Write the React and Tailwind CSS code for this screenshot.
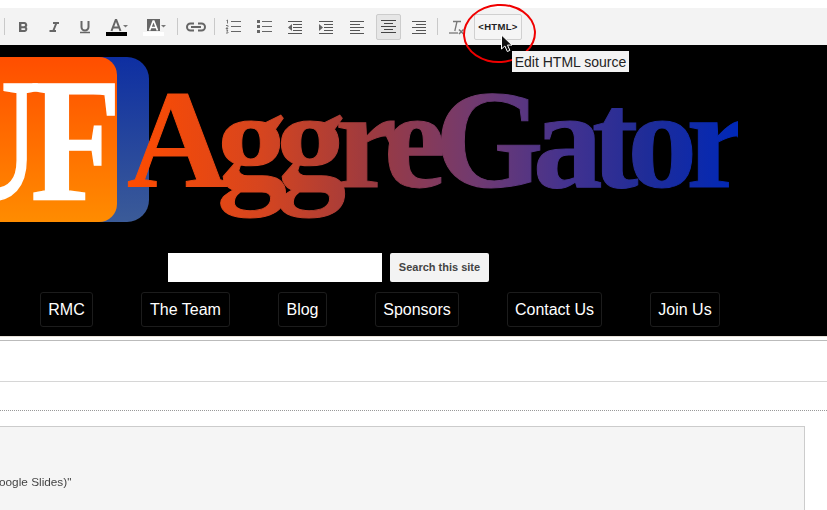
const sans = "font-['Liberation_Sans',Arial,sans-serif]";

function Sep({ className = "" }) {
  return <div className={`w-px h-[17px] bg-[#c9c9c9] shrink-0 ${className}`} />;
}

function Slot({ children, className = "" }) {
  return (
    <div className={`relative w-[31px] h-[37px] shrink-0 ${className}`}>
      <svg viewBox="0 0 31 37" width="31" height="37" fill="none" className="block">
        {children}
      </svg>
    </div>
  );
}

function Lines({ rows, color = "#555" }) {
  return rows.map(([x1, x2, y], i) => (
    <path key={i} d={`M${x1} ${y}H${x2}`} stroke={color} strokeWidth="1" shapeRendering="crispEdges" />
  ));
}

const ys = [13.5, 16.5, 19.5, 22.5, 25.5];

const nav = [
  ["RMC", "w-[53px]", "ml-0"],
  ["The Team", "w-[89px]", "ml-12"],
  ["Blog", "w-[49px]", "ml-12"],
  ["Sponsors", "w-[84px]", "ml-12"],
  ["Contact Us", "w-[95px]", "ml-12"],
  ["Join Us", "w-[70px]", "ml-12"],
];

export default function App() {
  return (
    <div className={`relative w-[827px] h-[510px] overflow-hidden bg-white ${sans}`}>
      {/* Toolbar */}
      <div className="mt-2 h-[37px] bg-[#f3f3f3] flex items-center pl-1">
        <Sep />
        <Slot className="ml-[3px]">
          <path
            fillRule="evenodd"
            d="M11 14h5.5a3 3 0 0 1 2 5 3 3 0 0 1-1.5 5H11zM13.4 16v2.2h2.6a1.1 1.1 0 0 0 0-2.2zM13.4 20.2V22h3a.9.9 0 0 0 0-1.8z"
            fill="#666"
          />
        </Slot>
        <Slot>
          <path d="M14 15h6M17.4 15l-3.2 8M10.5 23h6.5" stroke="#666" strokeWidth="2" />
        </Slot>
        <Slot>
          <path d="M11.5 13v6a3.5 3.5 0 0 0 7 0v-6" stroke="#666" strokeWidth="2" />
          <path d="M10 24.5h10" stroke="#666" strokeWidth="1.5" />
        </Slot>
        <Slot>
          <path d="M10.5 23l4.2-11h.6l4.2 11M12.4 19.5h5.2" stroke="#666" strokeWidth="2" />
          <path d="M22 17h5l-2.5 2.5z" fill="#777" />
          <rect x="5" y="24" width="21" height="4" fill="#000" />
        </Slot>
        <Slot className="ml-[6px]">
          <rect x="9" y="11" width="13" height="12" fill="#666" />
          <path d="M11.5 22.5l3.7-9.5h.6l3.7 9.5M13 19.5h5" stroke="#fff" strokeWidth="1.7" />
          <path d="M23 17h5l-2.5 2.5z" fill="#777" />
          <rect x="5" y="24" width="21" height="4" fill="#fff" />
        </Slot>
        <Sep className="ml-2" />
        <Slot className="ml-[3px]">
          <path d="M13 15.5H9.5a3.5 3.5 0 0 0 0 7H13M17 15.5h3.5a3.5 3.5 0 0 1 0 7H17M10 19h10" stroke="#666" strokeWidth="2" />
        </Slot>
        <Sep className="ml-[2px]" />
        <Slot className="ml-[3px]">
          <path d="M8.5 12.5l1-.5v3.5M8 17.5h1.8l.2 1-2 2h2.2M8 22h2l-1 1.2 1 1-.2.8H8" stroke="#666" strokeWidth="0.9" />
          <Lines rows={[[13, 23, 13.5], [13, 23, 18.5], [13, 23, 23.5]]} color="#666" />
        </Slot>
        <Slot>
          <rect x="8" y="12" width="3" height="3" fill="#666" />
          <rect x="8" y="17" width="3" height="3" fill="#666" />
          <rect x="8" y="22" width="3" height="3" fill="#666" />
          <Lines rows={[[13, 23, 13.5], [13, 23, 18.5], [13, 23, 23.5]]} color="#666" />
        </Slot>
        <Slot>
          <Lines rows={[[8, 22, ys[0]], [13, 22, ys[1]], [13, 22, ys[2]], [13, 22, ys[3]], [8, 22, ys[4]]]} />
          <path d="M12 16v7l-4-3.5z" fill="#666" />
        </Slot>
        <Slot>
          <Lines rows={[[8, 22, ys[0]], [13, 22, ys[1]], [13, 22, ys[2]], [13, 22, ys[3]], [8, 22, ys[4]]]} />
          <path d="M8 16v7l4-3.5z" fill="#666" />
        </Slot>
        <Slot>
          <Lines rows={[[8, 22, ys[0]], [8, 18, ys[1]], [8, 22, ys[2]], [8, 18, ys[3]], [8, 22, ys[4]]]} />
        </Slot>
        <div className="relative w-[31px] h-[37px] shrink-0 flex items-center justify-center">
          <div className="w-[25px] h-[26px] rounded-[2px] bg-[#e6e6e6] border border-[#ccc] flex items-center justify-center">
            <svg viewBox="0 0 15 13" width="15" height="13" fill="none">
              <Lines rows={[[0, 15, 0.5], [3, 12, 3.5], [0, 15, 6.5], [3, 12, 9.5], [0, 15, 12.5]]} color="#444" />
            </svg>
          </div>
        </div>
        <Slot>
          <Lines rows={[[8, 22, ys[0]], [12, 22, ys[1]], [8, 22, ys[2]], [12, 22, ys[3]], [8, 22, ys[4]]]} />
        </Slot>
        <Sep className="ml-[2px]" />
        <Slot className="ml-[3px]">
          <path d="M12 13.5h8M16 13.5l-2.2 9.5" stroke="#777" strokeWidth="1.3" />
          <path d="M8 25h9" stroke="#777" strokeWidth="1.3" />
          <path d="M18 21.5l4.5 4.5M22.5 21.5L18 26" stroke="#777" strokeWidth="1.5" />
        </Slot>
        <div className="ml-[2px] w-[48px] h-[26px] rounded-[2px] bg-[#f5f5f5] border border-[#d0d0d0] flex items-center justify-center pt-[2px] text-[9.5px] tracking-[0.3px] font-bold text-[#222] shrink-0">
          &lt;HTML&gt;
        </div>
      </div>

      {/* Black header */}
      <div className="h-[291px] bg-black pt-3 overflow-hidden">
        <div className="flex h-[165px]">
          <div className="relative ml-[-30px] w-[179px] h-[165px] shrink-0 rounded-[22px] bg-[linear-gradient(to_bottom,#0e2fa2,#3b5b98)]">
            <div className="w-[147px] h-[165px] rounded-[18px] bg-[linear-gradient(to_bottom,#ff4e00,#ff8c00)] overflow-hidden flex items-center justify-end">
              <span className="font-['Liberation_Serif',serif] font-bold text-white text-[175px] leading-none tracking-[-12px] [-webkit-text-stroke:1.5px_white] scale-x-[0.85] origin-right mr-[6px] mt-[2px]">
                UF
              </span>
            </div>
          </div>
          <div className="ml-[-22px] shrink-0 relative">
            <span className="block font-['Liberation_Serif',serif] font-bold text-[140px] leading-[165px] tracking-[-11px] [-webkit-text-stroke:1px_transparent] text-transparent bg-clip-text bg-[linear-gradient(to_right,#ff4c00_0%,#d6451f_22%,#9c3a40_40%,#713a70_57%,#43328f_72%,#1f2c98_85%,#0028b8_100%)]">
              AggreGator
            </span>
          </div>
        </div>
        <div className="mt-[31px] flex pl-[168px] gap-2">
          <div className="w-[214px] h-[29px] bg-white" />
          <div className="w-[99px] h-[29px] rounded-[2px] bg-[#f3f3f3] flex items-center justify-center text-[11px] font-bold text-[#444]">
            Search this site
          </div>
        </div>
        <div className="mt-[10px] flex pl-10">
          {nav.map(([n, w, m]) => (
            <div key={n} className={`h-[35px] rounded-[3px] border border-[#1c1c1c] flex items-center justify-center text-white text-base ${w} ${m}`}>
              {n}
            </div>
          ))}
        </div>
      </div>

      {/* Lower page */}
      <div className="h-px bg-[#e6e0d8]" />
      <div className="mt-[3px] h-px bg-[#bbb]" />
      <div className="mt-[40px] h-px bg-[#d6d6d6]" />
      <div className="mt-[28px] border-t border-dotted border-[#999]" />
      <div className="mt-[15px] mr-[22px] h-[100px] bg-[#f5f5f5] border-t border-r border-[#ccc] pt-[47px] text-[11.8px] leading-[16px] text-[#444] blur-[0.4px]">
        <span className="block ml-[-1px]">oogle Slides)"</span>
      </div>

      {/* Annotation overlays */}
      <div className="absolute left-[463px] top-1 w-[73px] h-[59px] rounded-[50%] border-[2.5px] border-[#f00000] rotate-[-4deg]" />
      <svg className="absolute left-[500px] top-[34px]" width="15" height="20" viewBox="0 0 15 20">
        <path d="M1.5 1v14l3.4-3 2.4 5.5 2.6-1.1-2.4-5.3h4.5z" fill="#111" stroke="#fff" strokeWidth="1" />
      </svg>
      <div className="absolute left-[512px] top-[51px] w-[117px] h-[21px] bg-[#f3f3f3] flex items-center justify-center text-sm text-[#222]">
        Edit HTML source
      </div>
    </div>
  );
}
